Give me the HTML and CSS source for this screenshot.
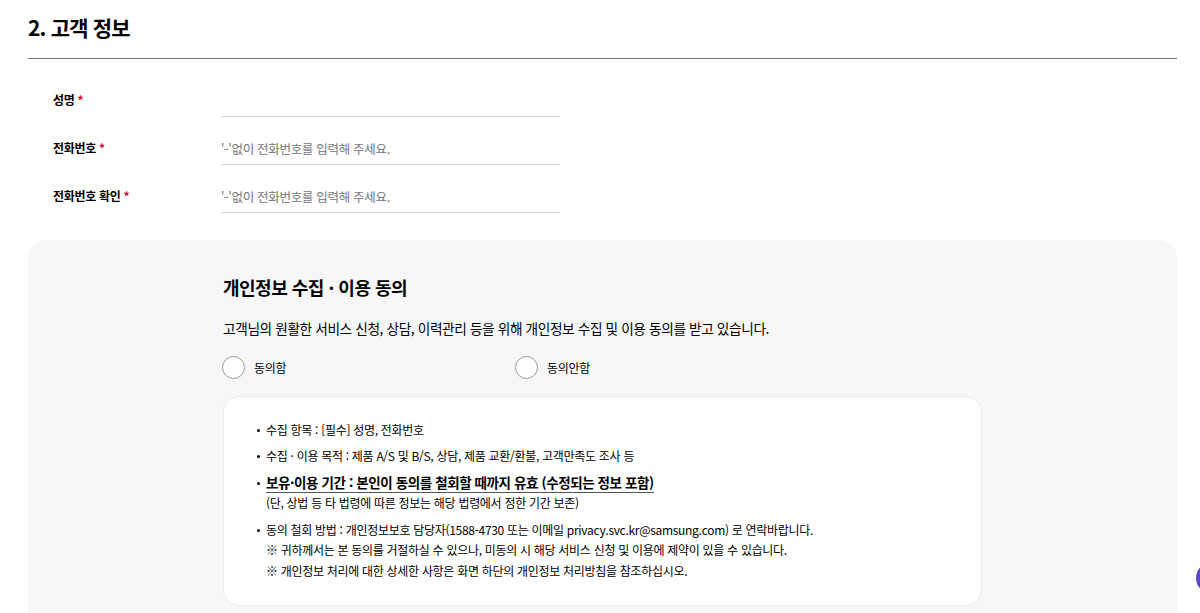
FILE: index.html
```html
<!DOCTYPE html>
<html lang="ko">
<head>
<meta charset="utf-8">
<link rel="stylesheet" href="styles.css">
</head>
<body>
<div class="page">
  <h2 class="title">2. 고객 정보</h2>
  <div class="form">
    <div class="row">
      <label class="label">성명 <span class="req">*</span></label>
      <div class="field"><span class="ph"></span></div>
    </div>
    <div class="row">
      <label class="label">전화번호 <span class="req">*</span></label>
      <div class="field"><span class="ph">'-'없이 전화번호를 입력해 주세요.</span></div>
    </div>
    <div class="row">
      <label class="label">전화번호 확인 <span class="req">*</span></label>
      <div class="field"><span class="ph">'-'없이 전화번호를 입력해 주세요.</span></div>
    </div>
  </div>
  <section class="agree">
    <h3 class="agree-title">개인정보 수집 · 이용 동의</h3>
    <p class="agree-desc">고객님의 원활한 서비스 신청, 상담, 이력관리 등을 위해 개인정보 수집 및 이용 동의를 받고 있습니다.</p>
    <div class="radios">
      <div class="radio"><span class="circle"></span><span>동의함</span></div>
      <div class="radio"><span class="circle"></span><span>동의안함</span></div>
    </div>
    <div class="card">
      <ul class="terms">
        <li>수집 항목 : [필수] 성명, 전화번호</li>
        <li>수집 · 이용 목적 : 제품 A/S 및 B/S, 상담, 제품 교환/환불, 고객만족도 조사 등</li>
        <li class="strong"><span class="u">보유·이용 기간 : 본인이 동의를 철회할 때까지 유효 (수정되는 정보 포함)</span><span class="sub">(단, 상법 등 타 법령에 따른 정보는 해당 법령에서 정한 기간 보존)</span></li>
        <li>동의 철회 방법 : 개인정보보호 담당자(1588-4730 또는 이메일 privacy.svc.kr@samsung.com) 로 연락바랍니다.<span class="note">※ 귀하께서는 본 동의를 거절하실 수 있으나, 미동의 시 해당 서비스 신청 및 이용에 제약이 있을 수 있습니다.</span><span class="note">※ 개인정보 처리에 대한 상세한 사항은 화면 하단의 개인정보 처리방침을 참조하십시오.</span></li>
      </ul>
    </div>
  </section>
</div>
<div class="fab"></div>
</body>
</html>
```
FILE: styles.css
```css
html, body { margin: 0; padding: 0; background: #fff; }
body {
  font-family: "Noto Sans CJK KR", "Noto Sans", sans-serif;
  color: #000;
  overflow: hidden;
  height: 613px;
  position: relative;
}
.page { padding: 0 23px 0 28px; }
.title {
  margin: 0;
  padding-top: 11px;
  font-size: 21px;
  line-height: 32px;
  font-weight: 700;
  letter-spacing: -0.8px;
  padding-bottom: 15px;
  border-bottom: 1px solid #777;
}
.form { padding: 10px 0 27px; }
.row { display: flex; align-items: stretch; height: 48px; }
.label {
  width: 168px;
  padding-left: 25px;
  font-size: 12px;
  font-weight: 700;
  display: flex;
  align-items: flex-end;
  padding-bottom: 8px;
  line-height: 18px;
  letter-spacing: -0.3px;
}
.req { color: #d1003a; margin-left: 3px; }
.field {
  width: 339px;
  border-bottom: 1px solid #d5d5d5;
  display: flex;
  align-items: flex-end;
  padding-bottom: 6px;
  box-sizing: border-box;
}
.ph { font-size: 12.5px; color: #777; line-height: 18px; letter-spacing: -0.3px; }
.agree {
  background: #f7f7f7;
  border-radius: 18px;
  padding: 32px 0 40px 195px;
  min-height: 400px;
}
.agree-title {
  margin: 0;
  font-size: 18px;
  line-height: 30px;
  font-weight: 700;
  letter-spacing: -0.5px;
}
.agree-desc {
  margin: 15px 0 0;
  font-size: 13.7px;
  line-height: 22px;
  letter-spacing: -0.4px;
}
.radios { display: flex; margin-top: 16px; }
.radio {
  width: 293px;
  display: flex;
  align-items: center;
  font-size: 12px;
  letter-spacing: -0.3px;
  height: 24px;
}
.circle {
  width: 21px; height: 21px;
  border: 1px solid #999;
  border-radius: 50%;
  background: #fff;
  margin-right: 9px;
  margin-left: -1px;
}
.card {
  margin-top: 17px;
  width: 759px;
  box-sizing: border-box;
  background: #fff;
  border: 1px solid #ececec;
  border-radius: 16px;
  padding: 23px 20px 20px 32px;
  height: 210px;
}
.terms { list-style: none; margin: 0; padding: 0; }
.terms li {
  position: relative;
  padding-left: 10px;
  font-size: 12px;
  line-height: 20px;
  letter-spacing: -0.3px;
  margin-bottom: 6px;
}
.terms li::before {
  content: "";
  position: absolute;
  left: 1px; top: 9px;
  width: 3px; height: 3px;
  border-radius: 50%;
  background: #000;
}
.terms li.strong { font-size: 13.5px; margin-top: 4px; }
.terms li.strong::before { top: 10px; }
.u {
  font-weight: 700;
  border-bottom: 1px solid #555;
  letter-spacing: -0.4px;
}
.sub { display: block; font-size: 12px; font-weight: 400; line-height: 22px; }
.note { display: block; line-height: 20.5px; }
.fab {
  position: absolute;
  left: 1196px; top: 562px;
  width: 32px; height: 32px;
  border-radius: 50%;
  background: #5a48c9;
}
```
